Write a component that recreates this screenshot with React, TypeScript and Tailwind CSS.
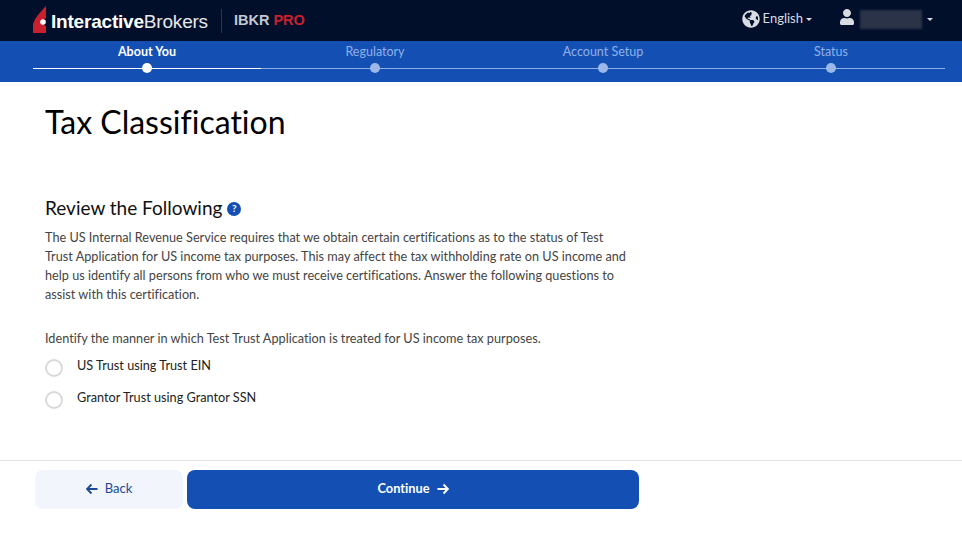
import React from "react";
import { FaGlobeAmericas, FaUser } from "react-icons/fa";

const font = { fontFamily: 'Lato, sans-serif' };

function Step({ label, active }: { label: string; active?: boolean }) {
  return (
    <div className="relative flex-1 h-full flex flex-col items-center">
      <div className={`mt-[3px] text-[12.5px] leading-[16px] ${active ? "font-bold text-white" : "text-[#8fb0e6]"}`}>{label}</div>
      <div className={`absolute left-0 right-0 top-[27px] h-px ${active ? "bg-white" : "bg-[#8fb0e6]"}`} />
      <div className={`absolute top-[22px] w-[10px] h-[10px] rounded-full ${active ? "bg-white" : "bg-[#9bb8e8]"}`} />
    </div>
  );
}

function Radio({ label }: { label: string }) {
  return (
    <div className="flex items-start h-[32px]">
      <div className="w-[18px] h-[18px] mt-[3px] rounded-full border-2 border-[#d9d9d9] bg-white" />
      <div className="ml-[14px] text-[12.7px] leading-[18px] text-[#222]">{label}</div>
    </div>
  );
}

export default function App() {
  return (
    <div className="w-[962px] h-[542px] bg-white overflow-hidden flex flex-col [font-variant-ligatures:none]" style={font}>
      <header className="h-[41px] bg-[#020f2b] flex items-center shrink-0" style={{ fontFamily: '"Liberation Sans", sans-serif' }}>
        <div className="ml-[32px] flex items-center">
          <svg width="17" height="27" viewBox="0 0 17 27" className="mt-[-3px]">
            <path d="M14 0 L14 27 L1 27 L1 19 C1 14 9 5 14 0Z" fill="#c8202f" />
            <path d="M9 16 L15 11 L15 21 Z" fill="#020f2b" />
            <circle cx="11" cy="16" r="2.8" fill="#fff" />
          </svg>
          <div className="ml-[2px] text-[19px] leading-[24px] text-white tracking-[-0.2px] flex mt-[3px]">
            <span className="font-bold">Interactive</span>
            <span className="text-[#e6e8ec]">Brokers</span>
          </div>
        </div>
        <div className="ml-[13px] w-px h-[24px] bg-[#2a3550]" />
        <div className="ml-[12px] text-[14.5px] font-bold text-[#c3c8d2] flex gap-[4px]">
          <span>IBKR</span>
          <span className="text-[#c8202f]">PRO</span>
        </div>
        <div className="ml-auto flex items-center" style={font}>
          <FaGlobeAmericas className="w-[18px] h-[18px] text-[#d8dbe2] mt-[-4px]" />
          <span className="ml-[3px] text-[13px] text-[#d8dbe2] mt-[-3px]">English</span>
          <span className="ml-[3px] mt-[-3px] w-0 h-0 border-x-[3px] border-x-transparent border-t-[3px] border-t-[#d8dbe2]" />
          <FaUser className="ml-[27px] mt-[-7px] w-[16px] h-[16px] text-[#d8dbe2]" />
          <div className="ml-[5px] w-[62px] h-[19px] bg-[#2a3347] blur-[1px] mt-[-2px]" />
          <span className="ml-[5px] mr-[29px] mt-[-3px] w-0 h-0 border-x-[3px] border-x-transparent border-t-[3px] border-t-[#d8dbe2]" />
        </div>
      </header>

      <nav className="h-[41px] bg-[#1450b4] flex pl-[33px] pr-[17px] shrink-0">
        <Step label="About You" active />
        <Step label="Regulatory" />
        <Step label="Account Setup" />
        <Step label="Status" />
      </nav>

      <main className="flex-1 flex flex-col">
        <div className="pl-[45px] w-[640px] flex-1">
          <h1 className="mt-[21px] text-[32px] leading-[38px] text-black font-normal">Tax Classification</h1>
          <div className="mt-[55px] flex items-center">
            <h2 className="text-[19px] leading-[24px] text-[#111] font-normal">Review the Following</h2>
            <span className="ml-[5px] mt-[1px] w-[14px] h-[14px] rounded-full bg-[#1450b4] text-white text-[10px] font-bold flex items-center justify-center">?</span>
          </div>
          <p className="mt-[8px] text-[12.7px] leading-[19px] text-[#444] w-[585px]">
            The US Internal Revenue Service requires that we obtain certain certifications as to the status of Test Trust Application for US income tax purposes. This may affect the tax withholding rate on US income and help us identify all persons from who we must receive certifications. Answer the following questions to assist with this certification.
          </p>
          <p className="mt-[25px] text-[12.7px] leading-[19px] text-[#444]">
            Identify the manner in which Test Trust Application is treated for US income tax purposes.
          </p>
          <div className="mt-[8px]">
            <Radio label="US Trust using Trust EIN" />
            <Radio label="Grantor Trust using Grantor SSN" />
          </div>
        </div>
        <footer className="h-[82px] border-t border-[#e3e3e3] pt-[9px] pl-[35px] flex gap-[4px] shrink-0">
          <button className="w-[148px] h-[39px] pb-[2px] rounded-[8px] bg-[#f2f5fb] text-[#1a4a94] text-[13px] flex items-center justify-center gap-[7px]">
            <svg width="12" height="12" viewBox="0 0 12 12" fill="none" stroke="#1a4a94" strokeWidth="1.9"><path d="M11.5 6H1M5.5 1.5 1 6l4.5 4.5" /></svg>
            Back
          </button>
          <button className="w-[452px] h-[39px] pb-[2px] rounded-[8px] bg-[#1450b4] text-white text-[12.8px] font-bold flex items-center justify-center gap-[7px]">
            Continue
            <svg width="12" height="12" viewBox="0 0 12 12" fill="none" stroke="#fff" strokeWidth="1.9"><path d="M.5 6H11M6.5 1.5 11 6l-4.5 4.5" /></svg>
          </button>
        </footer>
      </main>
    </div>
  );
}
